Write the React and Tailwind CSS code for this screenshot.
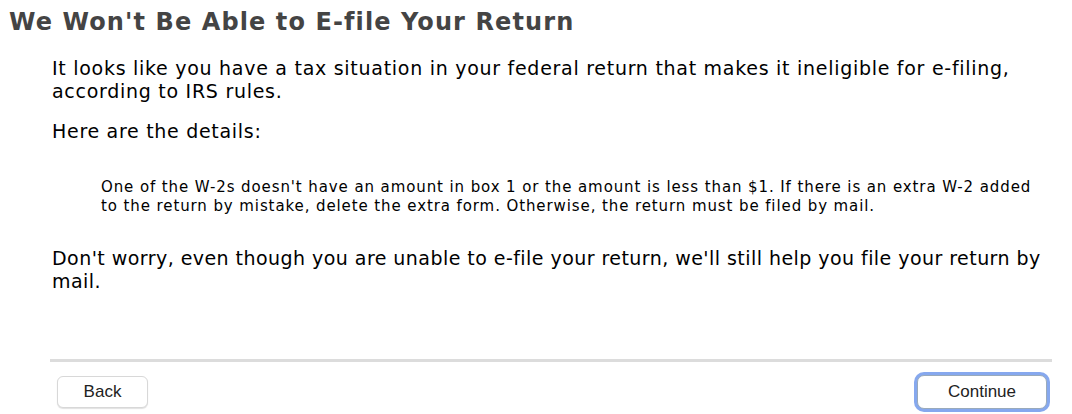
export default function App() {
  return (
    <div className="w-[1072px] h-[414px] bg-white flex flex-col font-['DejaVu_Sans',sans-serif] text-black">
      {/* ===== Heading ===== */}
      <h1 className="pl-[9px] pt-[8px] text-[24px] leading-[28px] font-bold tracking-[1.1px] text-[#444]">
        We Won't Be Able to E-file Your Return
      </h1>

      {/* ===== Body ===== */}
      <div className="pl-[52px] mt-[21px] text-[19px] leading-[23px] whitespace-nowrap">
        <p className="tracking-[0.72px]">
          It looks like you have a tax situation in your federal return that makes it ineligible for e-filing,
          <br />
          according to IRS rules.
        </p>
        <p className="mt-[17px] tracking-[0.7px]">Here are the details:</p>
        <p className="mt-[35px] pl-[49px] text-[15px] leading-[19px] tracking-[0.9px]">
          One of the W-2s doesn't have an amount in box 1 or the amount is less than $1. If there is an extra W-2 added
          <br />
          to the return by mistake, delete the extra form. Otherwise, the return must be filed by mail.
        </p>
        <p className="mt-[31px] tracking-[0.45px]">
          Don't worry, even though you are unable to e-file your return, we'll still help you file your return by
          <br />
          mail.
        </p>
      </div>

      {/* ===== Footer ===== */}
      <div className="mt-auto ml-[50px] mr-[20px] border-t-[3px] border-[#dcdcdc]" />
      <div className="flex justify-between items-center pl-[57px] pr-[25px] pt-[13px] pb-[5px] font-['Liberation_Sans',sans-serif] text-[17px] text-[#222]">
        <button className="w-[91px] h-[32px] rounded-[6px] bg-white border border-[#d8d8d8] shadow-[0_1px_1px_rgba(0,0,0,0.12)]">
          Back
        </button>
        <button className="w-[130px] h-[34px] rounded-[7px] bg-white border border-[#9ab] ring-[3px] ring-[#86a8ee]">
          Continue
        </button>
      </div>
    </div>
  );
}
